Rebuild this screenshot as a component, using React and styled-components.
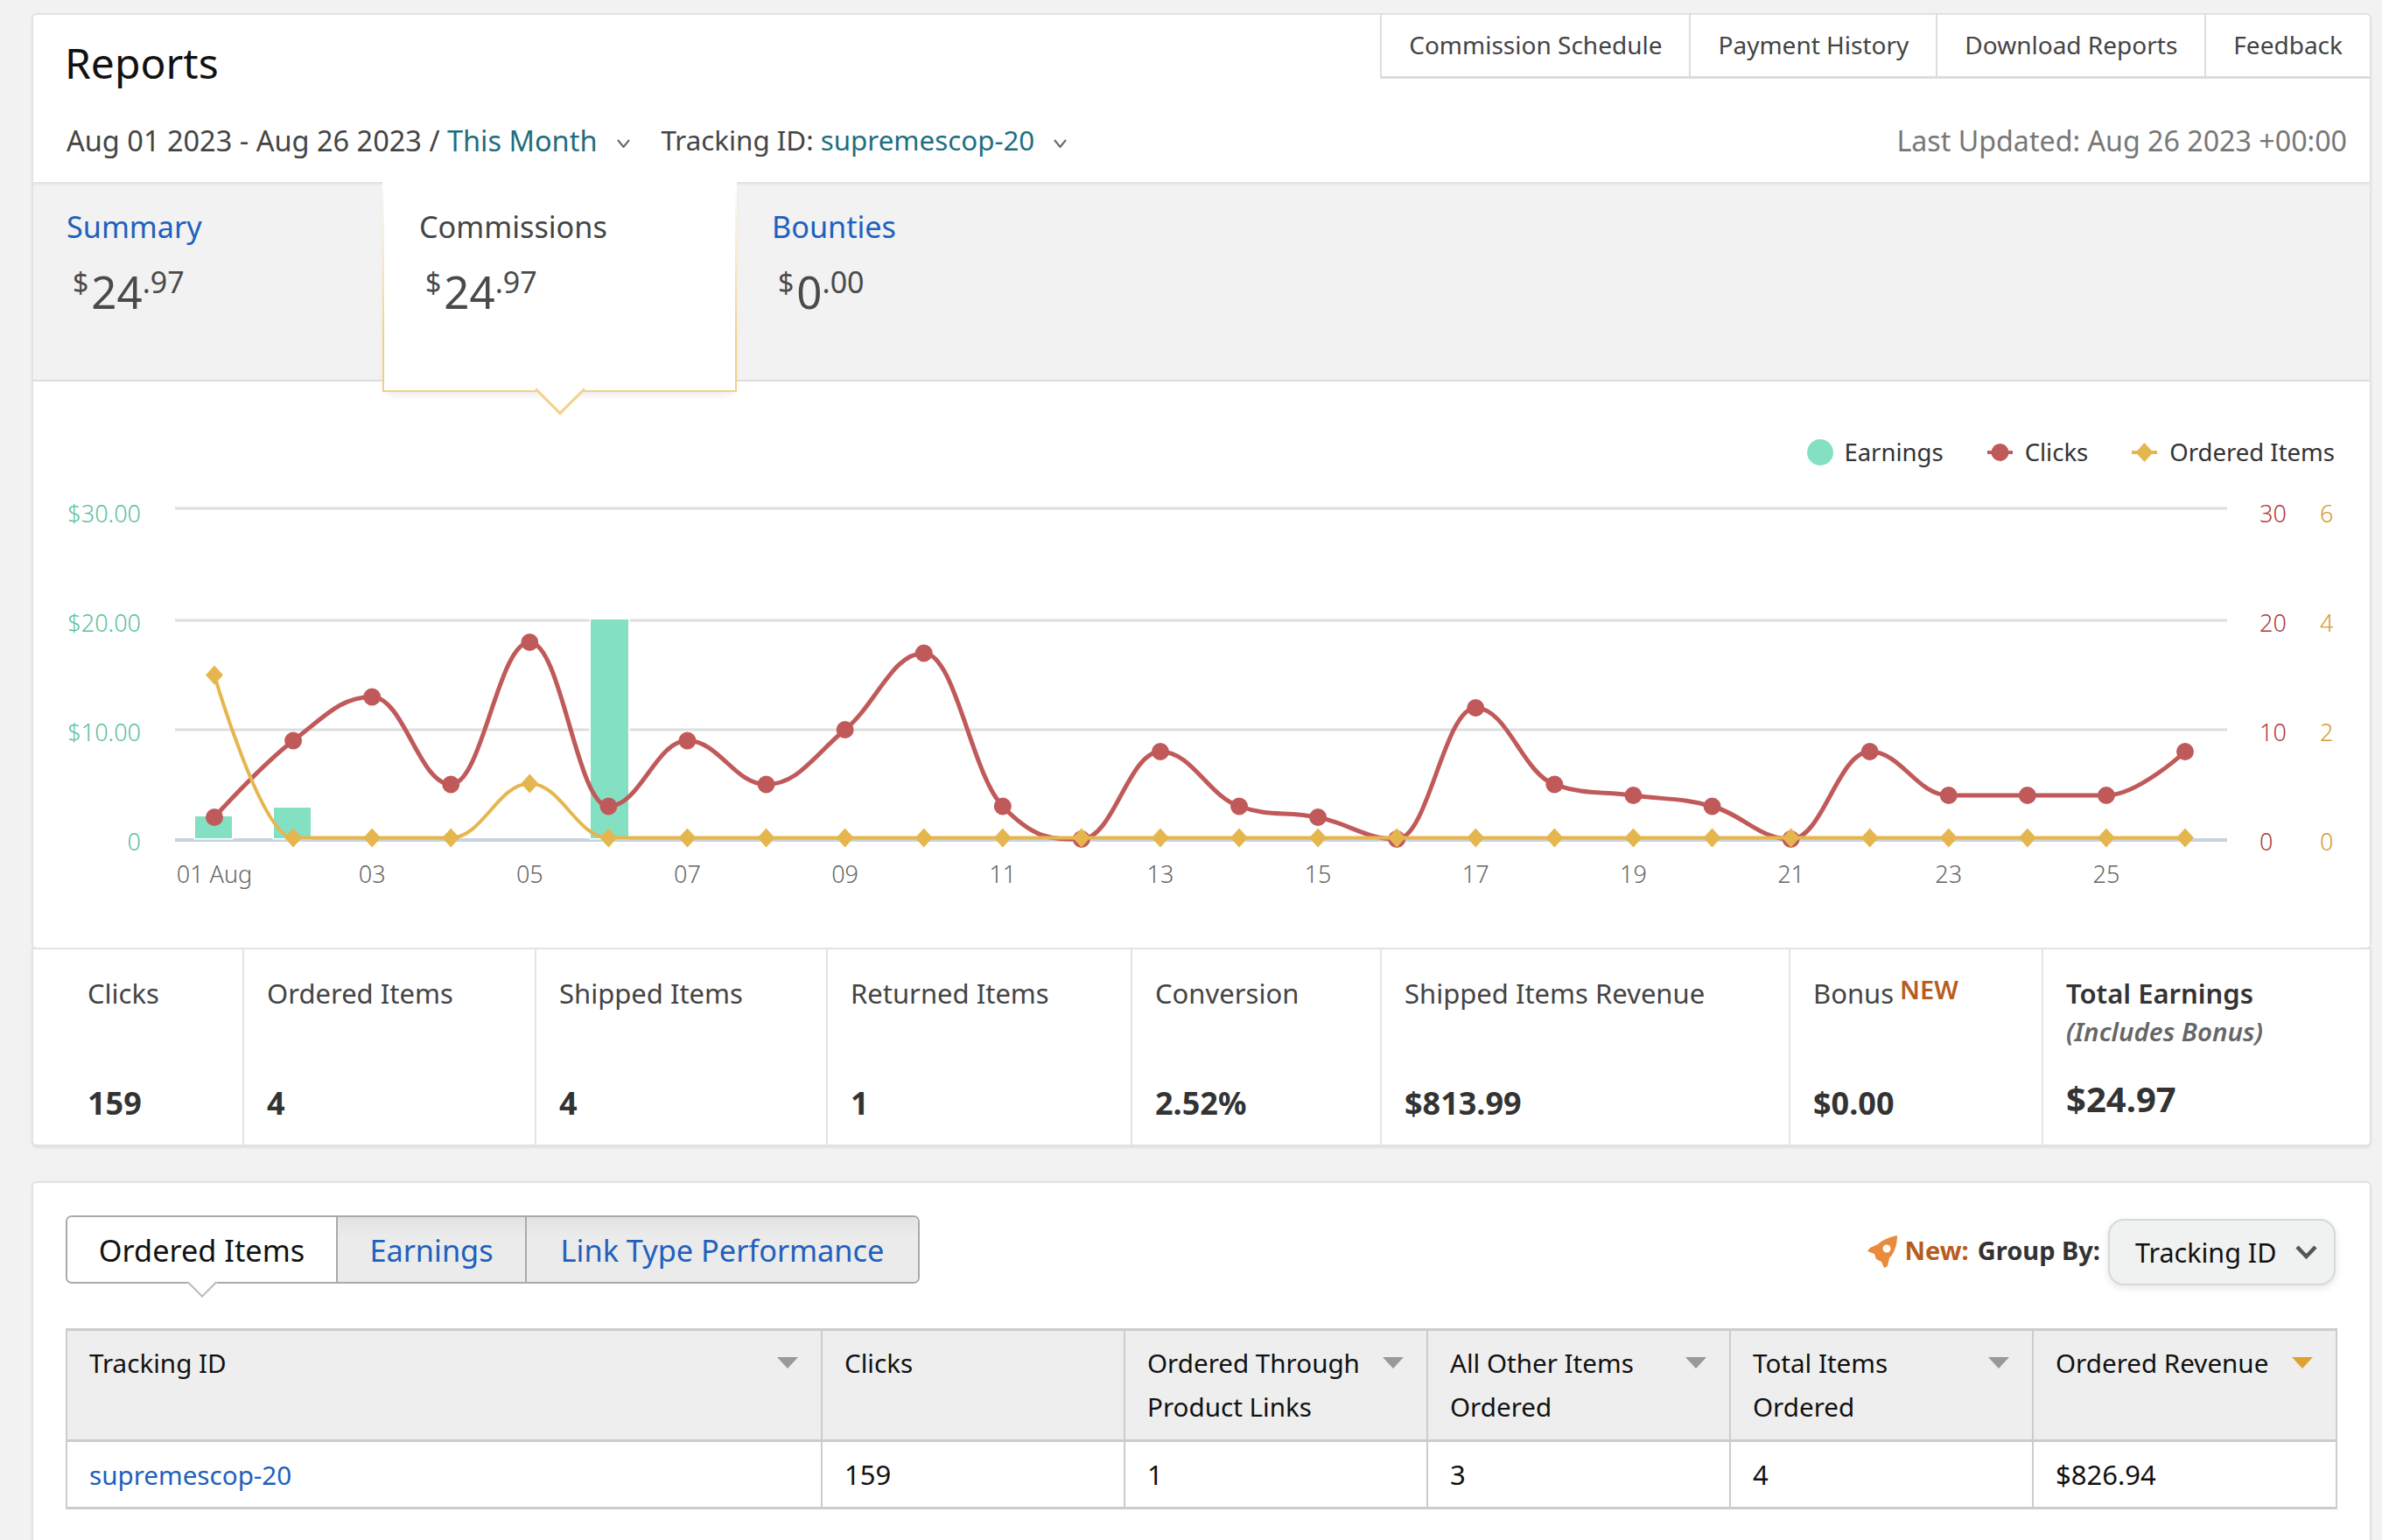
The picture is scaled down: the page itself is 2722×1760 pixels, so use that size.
import React from 'react';
import styled, { createGlobalStyle } from 'styled-components';

const GlobalStyle = createGlobalStyle`
  html, body { margin: 0; padding: 0; background: #f2f2f2; }
  body { font-family: "Noto Sans", "Open Sans", sans-serif; color: #333; }
  * { box-sizing: border-box; }
`;

const Page = styled.div`
  width: 2722px;
  height: 1760px;
  overflow: hidden;
  padding: 15px 12px 0 36px;
  background: #f2f2f2;
`;

const Card = styled.section`
  background: #fff;
  border: 2px solid #e2e2e2;
  border-radius: 6px;
  box-shadow: 0 1px 3px rgba(0, 0, 0, 0.06);
`;

const TopCard = styled(Card)`
  height: 1068px;
  border-bottom-width: 0;
`;

const Header = styled.header`
  height: 191px;
  display: flex;
  flex-direction: column;
`;

const HeaderTop = styled.div`
  height: 104px;
  display: flex;
  justify-content: space-between;
  align-items: flex-start;
  padding-left: 36px;
`;

const Title = styled.h1`
  margin: 25px 0 0;
  font-size: 48px;
  line-height: 60px;
  font-weight: 400;
  color: #111;
`;

const HeaderLinks = styled.nav`
  display: flex;
  height: 75px;
  border-bottom: 3px solid #ddd;
  margin-top: -2px;
`;

const HeaderLink = styled.a`
  display: flex;
  align-items: center;
  padding: 0 31px;
  border-left: 2px solid #ddd;
  font-size: 28px;
  color: #444;
`;

const FilterRow = styled.div`
  display: flex;
  align-items: center;
  justify-content: space-between;
  padding: 0 26px 0 38px;
  height: 78px;
  color: #444;
`;

const FilterGroup = styled.div`
  display: flex;
  align-items: center;
`;

const Filter = styled.span`
  margin-right: 21px;
  font-size: ${(p) => p.$size}px;
  white-space: pre;
`;

const TealLink = styled.a`
  color: #1f6e80;
`;

const Updated = styled.span`
  font-size: 32.2px;
  color: #777;
`;

const SmallChevron = styled.svg`
  width: 17px;
  height: 10px;
  margin: 8px 35px 0 0;
  fill: none;
  stroke: #666;
  stroke-width: 2;
`;

const TabStrip = styled.div`
  display: flex;
  align-items: flex-start;
  height: 228px;
  background: #f2f2f2;
  border-bottom: 2px solid #ddd;
  box-shadow: inset 0 6px 5px -5px rgba(0, 0, 0, 0.12);
`;

const ActiveSummaryTab = styled.div`
  position: relative;
  z-index: 2;
  width: 405px;
  height: 240px;
  padding: 28px 0 0 40px;
  background: #fff;
  border-style: solid;
  border-width: 0 2px 2px;
  border-image: linear-gradient(to bottom, rgba(242, 208, 136, 0), #f2d088 75%) 1;
  box-shadow: 0 7px 10px -5px rgba(0, 0, 0, 0.1);

  &::after {
    content: '';
    position: absolute;
    left: 50%;
    bottom: -20px;
    width: 38px;
    height: 38px;
    background: #fff;
    border-right: 3px solid #f2d088;
    border-bottom: 3px solid #f2d088;
    transform: translateX(-50%) rotate(45deg);
  }
`;

const SummaryTab = styled.div`
  width: ${(p) => p.$width}px;
  height: 100%;
  padding: 28px 0 0 38px;

  ${ActiveSummaryTab} + & {
    padding-left: 40px;
  }
`;

const TabName = styled.div`
  font-size: 34.2px;
  line-height: 46px;
  color: ${(p) => (p.$link ? '#2060bd' : '#444')};
`;

const Price = styled.div`
  margin: 10px 0 0 7px;
  line-height: 60px;
  font-size: 51px;
  color: #4a4a4a;
  white-space: nowrap;
`;

const PriceSup = styled.span`
  font-size: ${(p) => p.$size}px;
  vertical-align: 18px;
  margin-right: ${(p) => p.$after || 0}px;
`;

const ChartArea = styled.div`
  background: #fff;
`;

const Legend = styled.div`
  height: 100px;
  padding: 62px 40px 0 0;
  display: flex;
  justify-content: flex-end;
  gap: 50px;
  font-size: 27.5px;
  line-height: 38px;
  color: #333;
`;

const LegendItem = styled.div`
  display: flex;
  align-items: center;
  gap: 14px;
`;

const LegendDot = styled.span`
  width: 30px;
  height: 30px;
  margin-right: -2px;
  border-radius: 50%;
  background: #83e0c3;
`;

const LegendMark = styled.svg`
  width: 29px;
  height: 22px;
`;

const ChartSvg = styled.svg`
  display: block;
  width: 2670px;
  height: 545px;
  font-family: "Noto Sans", sans-serif;
  font-size: 27px;
  font-weight: 300;
`;

const StatsCard = styled(Card)`
  height: 227px;
  display: grid;
  grid-template-columns: 239px 334px 333px 348px 285px 467px 289px 1fr;
  border-radius: 0 0 6px 6px;
  box-shadow: 0 2px 3px rgba(0, 0, 0, 0.08);
`;

const Stat = styled.div`
  display: flex;
  flex-direction: column;
  padding: 28px 0 ${(p) => (p.$total ? 27 : 22)}px 26px;
  border-left: 2px solid #e4e4e4;

  &:first-child {
    border-left: 0;
    padding-left: 62px;
  }
`;

const StatLabel = styled.div`
  font-size: 31px;
  line-height: 44px;
  color: ${(p) => (p.$total ? '#333' : '#444')};
  font-weight: ${(p) => (p.$total ? 600 : 400)};
`;

const NewFlag = styled.span`
  font-size: 29px;
  line-height: 0;
  font-weight: 600;
  color: #b85c1e;
  vertical-align: 5px;
  margin-left: 7px;
`;

const StatNote = styled.div`
  font-size: 29.5px;
  line-height: 44px;
  font-style: italic;
  font-weight: 600;
  color: #666;
`;

const StatValue = styled.div`
  margin-top: auto;
  font-size: ${(p) => (p.$total ? 40 : 36)}px;
  line-height: 50px;
  font-weight: 700;
  color: #333;
`;

const TableCard = styled(Card)`
  margin-top: 40px;
  height: 430px;
  padding: 37px 37px 0;
  border-bottom: 0;
`;

const Toolbar = styled.div`
  display: flex;
  justify-content: space-between;
  align-items: flex-start;
`;

const TableTabs = styled.div`
  display: flex;
  height: 78px;
  border: 2px solid #aaa;
  border-radius: 7px;
`;

const TableTab = styled.div`
  position: relative;
  width: ${(p) => p.$width}px;
  display: flex;
  align-items: center;
  justify-content: center;
  font-size: 34.3px;
  color: ${(p) => (p.$active ? '#111' : '#2060bd')};
  background: ${(p) => (p.$active ? '#fff' : 'linear-gradient(#e2e2e2, #ebebeb 30%)')};
  border-left: ${(p) => (p.$first ? '0' : '2px solid #aaa')};

  &:first-child { border-radius: 5px 0 0 5px; }
  &:last-child { border-radius: 0 5px 5px 0; }

  ${(p) => p.$active && `
    &::after {
      content: '';
      position: absolute;
      left: 50%;
      bottom: -13px;
      width: 22px;
      height: 22px;
      background: #fff;
      border-right: 2px solid #bbb;
      border-bottom: 2px solid #bbb;
      transform: translateX(-50%) rotate(45deg);
    }
  `}
`;

const GroupBy = styled.div`
  display: flex;
  align-items: center;
  height: 76px;
  margin: 4px 2px 0 0;
`;

const GroupLabel = styled.span`
  margin-bottom: 5px;
  font-size: 29px;
  font-weight: 700;
  color: #333;
`;

const NewLabel = styled.span`
  color: #b85c1e;
  margin: 0 10px 0 8px;
`;

const Rocket = styled.svg`
  width: 34px;
  height: 37px;
  margin-bottom: 2px;
`;

const Select = styled.div`
  width: 260px;
  height: 76px;
  margin-left: 9px;
  padding: 0 19px 0 29px;
  display: flex;
  align-items: center;
  justify-content: space-between;
  background: #f0f2f2;
  border: 2px solid #d5d9d9;
  border-radius: 18px;
  box-shadow: 0 3px 8px rgba(15, 17, 17, 0.1);
  font-size: 30.5px;
  color: #111;
`;

const SelectChevron = styled.svg`
  width: 25px;
  height: 16px;
  fill: none;
  stroke: #555;
  stroke-width: 4.5;
`;

const Table = styled.table`
  width: 2594px;
  margin-top: 49px;
  table-layout: fixed;
  border-collapse: collapse;
  font-size: 29.6px;
  color: #111;
`;

const Th = styled.th`
  width: ${(p) => p.$width}px;
  height: 127px;
  padding: 12px 25px 0;
  vertical-align: top;
  font-weight: 400;
  text-align: left;
  line-height: 50px;
  background: #eee;
  border: 2px solid #ccc;
  border-width: 3px 2px;
`;

const ThInner = styled.div`
  display: flex;
  justify-content: space-between;
`;

const SortMark = styled.i`
  flex: none;
  width: 0;
  height: 0;
  margin: 18px 1px 0 8px;
  border-style: solid;
  border-width: 13px 12px 0;
  border-color: ${(p) => (p.$on ? '#e2a030' : '#999')} transparent transparent;
`;

const Td = styled.td`
  height: 77px;
  padding: 0 25px;
  border: 2px solid #ccc;
  border-bottom-width: 3px;
  font-size: ${(p) => (p.$num ? 31 : 29.6)}px;
`;

const BlueLink = styled.a`
  color: #2060bd;
`;

// chart data, one entry a day
const clicks = [2, 9, 13, 5, 18, 3, 9, 5, 10, 17, 3, 0, 8, 3, 2, 0, 12, 5, 4, 3, 0, 8, 4, 4, 4, 8];
const ordered = clicks.map((_, i) => (i === 0 ? 3 : i === 4 ? 1 : 0));
const STEP = 90.08;
const dayX = (i) => 245 + i * STEP;
const clickPoints = clicks.map((v, i) => [dayX(i), 959 - v * 12.5]);
const orderPoints = ordered.map((v, i) => [dayX(i), 957.5 - v * 62]);

// same curve as a highcharts spline
function spline(points) {
  const conts = points.map(([x, y], i) => {
    if (i === 0 || i === points.length - 1) return { l: [x, y], r: [x, y] };
    const [px, py] = points[i - 1];
    const [nx, ny] = points[i + 1];
    const lx = (1.5 * x + px) / 2.5;
    const rx = (1.5 * x + nx) / 2.5;
    let ly = (1.5 * y + py) / 2.5;
    let ry = (1.5 * y + ny) / 2.5;
    const fix = ((ry - ly) * (rx - x)) / (rx - lx) + y - ry;
    ly += fix;
    ry += fix;
    if (ly > py && ly > y) {
      ly = Math.max(py, y);
      ry = 2 * y - ly;
    } else if (ly < py && ly < y) {
      ly = Math.min(py, y);
      ry = 2 * y - ly;
    }
    if (ry > ny && ry > y) {
      ry = Math.max(ny, y);
      ly = 2 * y - ry;
    } else if (ry < ny && ry < y) {
      ry = Math.min(ny, y);
      ly = 2 * y - ry;
    }
    return { l: [lx, ly], r: [rx, ry] };
  });
  return points.reduce((d, [x, y], i) => {
    if (i === 0) return `M${x} ${y}`;
    const a = conts[i - 1].r;
    const b = conts[i].l;
    return `${d} C${a[0]} ${a[1]} ${b[0]} ${b[1]} ${x} ${y}`;
  }, '');
}

const gridLines = [
  { y: 581, left: '$30.00', mid: '30', right: '6', text: 598 },
  { y: 709, left: '$20.00', mid: '20', right: '4', text: 723 },
  { y: 834, left: '$10.00', mid: '10', right: '2', text: 848 },
  { y: 960, left: '0', mid: '0', right: '0', text: 973 },
];

const bars = [
  { x: 223, y: 933, w: 42 },
  { x: 313, y: 923, w: 42 },
  { x: 675, y: 708, w: 43 },
];

function Diamond({ x, y }) {
  return <path d={`M${x} ${y - 11}L${x + 10} ${y}L${x} ${y + 11}L${x - 10} ${y}Z`} fill="#e6b64e" />;
}

function Chart() {
  return (
    <ChartSvg viewBox="38 536 2670 545">
      {gridLines.map((g) => (
        <g key={g.y}>
          <line x1="200" x2="2545" y1={g.y} y2={g.y} stroke={g.y === 960 ? '#c8d3e2' : '#dedede'} strokeWidth={g.y === 960 ? 4 : 3} />
          <text x="161" y={g.text - 1} textAnchor="end" fill="#5cbf9f">{g.left}</text>
          <text x="2582" y={g.text - 1} fill="#b03a3a">{g.mid}</text>
          <text x="2651" y={g.text - 1} fill="#d49a30">{g.right}</text>
        </g>
      ))}
      {bars.map((b) => (
        <rect key={b.x} x={b.x} y={b.y} width={b.w} height={958 - b.y} fill="#83e0c3" stroke="#fff" strokeWidth="3" paintOrder="stroke" />
      ))}
      {clicks.map((_, i) => (i % 2 === 0 ? (
        <text key={i} x={dayX(i)} y="1009" textAnchor="middle" fill="#666">
          {i === 0 ? '01 Aug' : String(i + 1).padStart(2, '0')}
        </text>
      ) : null))}
      <path d={spline(clickPoints)} fill="none" stroke="#c05a5a" strokeWidth="5" />
      {clickPoints.map(([x, y]) => <circle key={x} cx={x} cy={y} r="10" fill="#c05a5a" />)}
      <path d={spline(orderPoints)} fill="none" stroke="#e6b64e" strokeWidth="4" />
      {orderPoints.map(([x, y]) => <Diamond key={x} x={x} y={y} />)}
    </ChartSvg>
  );
}

function PriceTag({ whole, cents }) {
  return (
    <Price>
      <PriceSup $size={32} $after={3}>$</PriceSup>
      {whole}
      <PriceSup $size={34}>.{cents}</PriceSup>
    </Price>
  );
}

const stats = [
  { label: 'Clicks', value: '159' },
  { label: 'Ordered Items', value: '4' },
  { label: 'Shipped Items', value: '4' },
  { label: 'Returned Items', value: '1' },
  { label: 'Conversion', value: '2.52%' },
  { label: 'Shipped Items Revenue', value: '$813.99' },
  { label: 'Bonus', flag: 'NEW', value: '$0.00' },
  { label: 'Total Earnings', note: '(Includes Bonus)', value: '$24.97', total: true },
];

const columns = [
  { name: ['Tracking ID'], width: 863, sort: true },
  { name: ['Clicks'], width: 346 },
  { name: ['Ordered Through', 'Product Links'], width: 346, sort: true },
  { name: ['All Other Items', 'Ordered'], width: 346, sort: true },
  { name: ['Total Items', 'Ordered'], width: 346, sort: true },
  { name: ['Ordered Revenue'], width: 347, sort: true, on: true },
];

export default function App() {
  return (
    <Page>
      <GlobalStyle />
      <TopCard>
        <Header>
          <HeaderTop>
            <Title>Reports</Title>
            <HeaderLinks>
              <HeaderLink>Commission Schedule</HeaderLink>
              <HeaderLink>Payment History</HeaderLink>
              <HeaderLink>Download Reports</HeaderLink>
              <HeaderLink>Feedback</HeaderLink>
            </HeaderLinks>
          </HeaderTop>
          <FilterRow>
            <FilterGroup>
              <Filter $size={32.5}>Aug 01 2023 - Aug 26 2023 / <TealLink>This Month</TealLink></Filter>
              <SmallChevron viewBox="0 0 17 10"><polyline points="2,1 8.5,9 15,1" /></SmallChevron>
              <Filter $size={31.3}>Tracking ID: <TealLink>supremescop-20</TealLink></Filter>
              <SmallChevron viewBox="0 0 17 10"><polyline points="2,1 8.5,9 15,1" /></SmallChevron>
            </FilterGroup>
            <Updated>Last Updated: Aug 26 2023 +00:00</Updated>
          </FilterRow>
        </Header>
        <TabStrip>
          <SummaryTab $width={399}>
            <TabName $link>Summary</TabName>
            <PriceTag whole="24" cents="97" />
          </SummaryTab>
          <ActiveSummaryTab>
            <TabName>Commissions</TabName>
            <PriceTag whole="24" cents="97" />
          </ActiveSummaryTab>
          <SummaryTab $width={400}>
            <TabName $link>Bounties</TabName>
            <PriceTag whole="0" cents="00" />
          </SummaryTab>
        </TabStrip>
        <ChartArea>
          <Legend>
            <LegendItem><LegendDot />Earnings</LegendItem>
            <LegendItem>
              <LegendMark viewBox="0 0 29 22">
                <rect y="9" width="29" height="4" fill="#c05a5a" />
                <circle cx="14.5" cy="11" r="10" fill="#c05a5a" />
              </LegendMark>
              Clicks
            </LegendItem>
            <LegendItem>
              <LegendMark viewBox="0 0 29 22">
                <rect y="9" width="29" height="4" fill="#e6b64e" />
                <path d="M14.5 0L24.5 11L14.5 22L4.5 11Z" fill="#e6b64e" />
              </LegendMark>
              Ordered Items
            </LegendItem>
          </Legend>
          <Chart />
        </ChartArea>
      </TopCard>
      <StatsCard>
        {stats.map((s) => (
          <Stat key={s.label} $total={s.total}>
            <StatLabel $total={s.total}>
              {s.label}
              {s.flag && <NewFlag>{s.flag}</NewFlag>}
            </StatLabel>
            {s.note && <StatNote>{s.note}</StatNote>}
            <StatValue $total={s.total}>{s.value}</StatValue>
          </Stat>
        ))}
      </StatsCard>
      <TableCard>
        <Toolbar>
          <TableTabs>
            <TableTab $width={307} $active $first>Ordered Items</TableTab>
            <TableTab $width={216}>Earnings</TableTab>
            <TableTab $width={449}>Link Type Performance</TableTab>
          </TableTabs>
          <GroupBy>
            <Rocket viewBox="0 0 34 37">
              <path d="M34 0C24 2 16 6 12 10L3 14L0 18L8 21L10 27L16 30L19 37L23 35L25 26C31 20 34 10 34 0Z" fill="#e98a3c" />
              <circle cx="22" cy="15" r="4.5" fill="#fff" />
            </Rocket>
            <GroupLabel>
              <NewLabel>New:</NewLabel>
              Group By:
            </GroupLabel>
            <Select>
              Tracking ID
              <SelectChevron viewBox="0 0 25 16"><polyline points="2,2 12.5,13 23,2" /></SelectChevron>
            </Select>
          </GroupBy>
        </Toolbar>
        <Table>
          <thead>
            <tr>
              {columns.map((c) => (
                <Th key={c.name[0]} $width={c.width}>
                  <ThInner>
                    <span>
                      {c.name.map((line) => <div key={line}>{line}</div>)}
                    </span>
                    {c.sort && <SortMark $on={c.on} />}
                  </ThInner>
                </Th>
              ))}
            </tr>
          </thead>
          <tbody>
            <tr>
              <Td><BlueLink>supremescop-20</BlueLink></Td>
              <Td $num>159</Td>
              <Td $num>1</Td>
              <Td $num>3</Td>
              <Td $num>4</Td>
              <Td $num>$826.94</Td>
            </tr>
          </tbody>
        </Table>
      </TableCard>
    </Page>
  );
}
